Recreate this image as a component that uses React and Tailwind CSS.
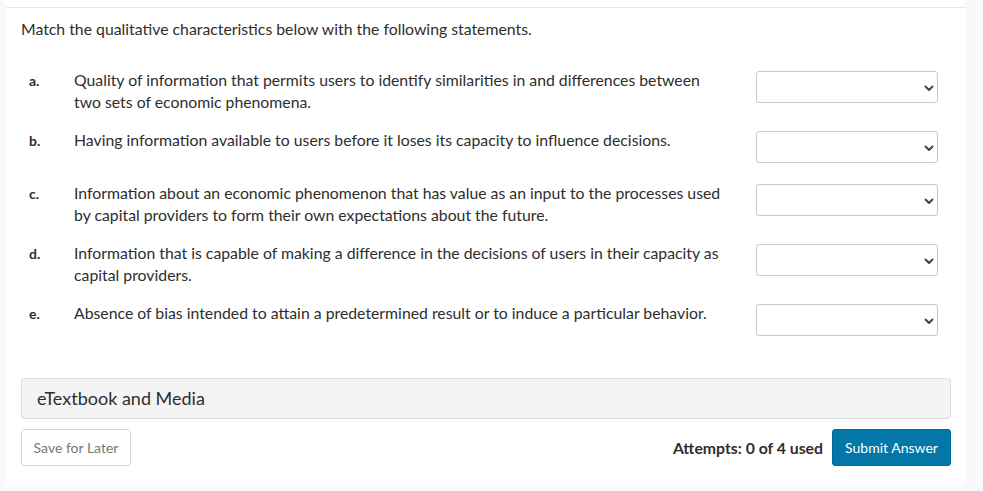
import React from "react";

const items = [
  ["a.", "Quality of information that permits users to identify similarities in and differences between two sets of economic phenomena."],
  ["b.", "Having information available to users before it loses its capacity to influence decisions."],
  ["c.", "Information about an economic phenomenon that has value as an input to the processes used by capital providers to form their own expectations about the future."],
  ["d.", "Information that is capable of making a difference in the decisions of users in their capacity as capital providers."],
  ["e.", "Absence of bias intended to attain a predetermined result or to induce a particular behavior."],
];

function Chevron() {
  return (
    <svg width="10" height="7" viewBox="0 0 10 7" className="absolute right-[3px] top-[13px]">
      <path d="M1.5 1.5 L5 5 L8.5 1.5" fill="none" stroke="#444" strokeWidth="2" strokeLinecap="round" strokeLinejoin="round" />
    </svg>
  );
}

export default function App() {
  return (
    <div className="min-h-[491px] w-full bg-[#f9f9f9] pl-[6px] pr-[17px] pb-[7px]" style={{ fontFamily: "Lato, 'Open Sans', sans-serif" }}>
      <div className="bg-white h-[484px] flex flex-col">
        <div className="h-[7px]" />
        <div className="border-t border-[#e6e6e6] px-[15px] pt-[10px] flex flex-col flex-1">
          <div className="text-[15.8px] leading-[22px] text-[#2e2e2e]">Match the qualitative characteristics below with the following statements.</div>
          <div className="mt-[31px] flex flex-col">
            {items.map(([l, t]) => (
              <div key={l} className="flex items-start">
                <div className="w-[53px] pl-[8px] text-[14px] leading-[20px] font-bold text-[#2e2e2e]">{l}</div>
                <div className="w-[652px] text-[15.8px] leading-[22px] text-[#2e2e2e] mt-[-2px] mb-[18px]">{t}</div>
                <div className="ml-[30px] mb-[21px] relative w-[182px] h-[32px] border border-[#c8c8c8] rounded-[3px] bg-white">
                  <Chevron />
                </div>
              </div>
            ))}
          </div>
          <div className="mt-[21px] h-[41px] border border-[#dcdcdc] rounded-[3px] bg-[#f4f4f4] flex items-center pl-[15px] text-[18px] text-[#2e2e2e]">eTextbook and Media</div>
          <div className="mt-[10px] flex items-center">
            <button className="h-[37px] w-[110px] border border-[#d6d6d6] rounded-[3px] bg-white text-[14px] text-[#777]">Save for Later</button>
            <div className="ml-auto text-[15.8px] font-bold text-[#2e2e2e] mr-[9px]">Attempts: 0 of 4 used</div>
            <button className="h-[37px] w-[119px] rounded-[3px] bg-[#0277a8] border border-[#026a96] text-[14px] text-white">Submit Answer</button>
          </div>
        </div>
      </div>
    </div>
  );
}
